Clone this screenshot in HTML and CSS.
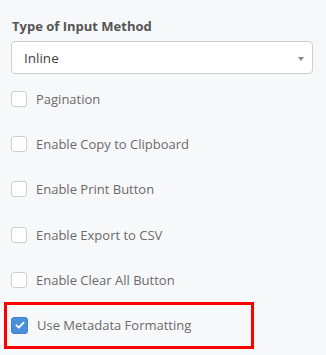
FILE: index.html
```html
<!DOCTYPE html>
<html>
<head>
<meta charset="utf-8">
<link rel="stylesheet" href="styles.css">
</head>
<body>
<div class="panel">
  <label class="field-label">Type of Input Method</label>
  <div class="select">
    <span class="select-value">Inline</span>
    <span class="caret"></span>
  </div>
  <div class="options">
    <div class="option"><span class="box"></span><span class="opt-text">Pagination</span></div>
    <div class="option"><span class="box"></span><span class="opt-text">Enable Copy to Clipboard</span></div>
    <div class="option"><span class="box"></span><span class="opt-text">Enable Print Button</span></div>
    <div class="option"><span class="box"></span><span class="opt-text">Enable Export to CSV</span></div>
    <div class="option"><span class="box"></span><span class="opt-text">Enable Clear All Button</span></div>
    <div class="option highlight">
      <span class="box checked">
        <svg viewBox="0 0 16 16" width="12" height="12"><path d="M3.2 8.4 L6.4 11.4 L12.8 4.8" fill="none" stroke="#fff" stroke-width="2.4" stroke-linecap="round" stroke-linejoin="round"/></svg>
      </span>
      <span class="opt-text">Use Metadata Formatting</span>
    </div>
  </div>
</div>
</body>
</html>
```
FILE: styles.css
```css
html, body {
  margin: 0;
  padding: 0;
  background: #f7f8fa;
}
body {
  width: 326px;
  height: 355px;
  overflow: hidden;
  font-family: "Open Sans", "Liberation Sans", sans-serif;
}
.panel {
  padding: 17px 13px 0 11px;
  display: flex;
  flex-direction: column;
}
.field-label {
  font-size: 13px;
  font-weight: 700;
  color: #555;
  line-height: 18px;
  padding-left: 1px;
}
.select {
  margin-top: 6px;
  height: 33px;
  box-sizing: border-box;
  background: #fff;
  border: 1px solid #cfcfcf;
  border-radius: 4px;
  display: flex;
  align-items: center;
  justify-content: space-between;
  padding: 0 8px 0 12px;
}
.select-value {
  font-size: 13.5px;
  color: #444;
}
.caret {
  width: 0;
  height: 0;
  border-left: 3.5px solid transparent;
  border-right: 3.5px solid transparent;
  border-top: 4px solid #888;
  margin-top: 2px;
}
.options {
  margin-top: 17px;
  display: flex;
  flex-direction: column;
}
.option {
  display: flex;
  align-items: center;
  height: 16px;
  margin-bottom: 29.2px;
}
.option:last-child {
  margin-bottom: 0;
}
.box {
  width: 16px;
  height: 16px;
  box-sizing: border-box;
  border: 1px solid #cfcfcf;
  border-radius: 3px;
  background: #fff;
  flex: none;
  display: flex;
  align-items: center;
  justify-content: center;
}
.box.checked {
  background: #4a8fd8;
  border-color: #3f84cf;
  width: 17px;
  height: 17px;
}
.opt-text {
  margin-left: 9px;
  font-size: 13px;
  color: #6b6b6b;
}
.highlight {
  margin-left: -7px;
  margin-top: -15px;
  height: 47px;
  width: 250px;
  box-sizing: border-box;
  border: 3px solid #ff0000;
  padding-left: 4px;
}
```
